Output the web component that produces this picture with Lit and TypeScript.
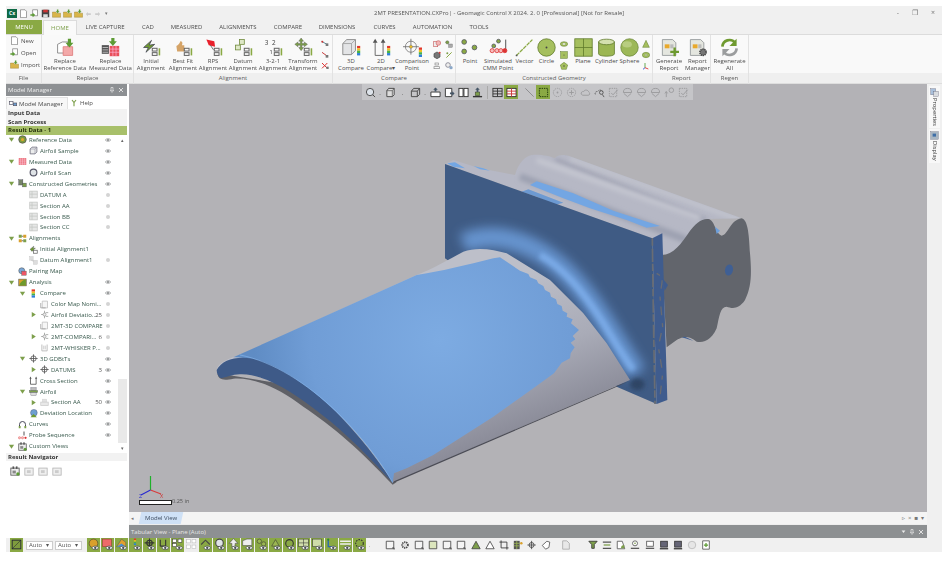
import { LitElement, css, html, svg } from "lit";
import { customElement } from "lit/decorators.js";

const G = "#8aa944";
const rainbow = (x = 18, y = 10) => svg`
  <rect x=${x} y=${y} width="4" height="3" fill="#e2382c"/>
  <rect x=${x} y=${y + 3} width="4" height="3" fill="#f0c020"/>
  <rect x=${x} y=${y + 6} width="4" height="3" fill="#45b04a"/>
  <rect x=${x} y=${y + 9} width="4" height="3" fill="#2f7fd8"/>`;
const alignMark = svg`
  <rect x="13" y="13" width="6" height="3.5" fill="none" stroke="#666" stroke-width="1.3"/>
  <rect x="13" y="18.5" width="6" height="3.5" fill="none" stroke="#666" stroke-width="1.3"/>
  <rect x="21" y="13" width="2" height="9" fill=${G}/>`;
const doc = svg`
  <path d="M3 2h13l4 4v16H3z" fill="#e4e6df" stroke="#8a8f90"/>
  <rect x="6" y="8" width="6" height="5" fill="#e9a92b"/>
  <rect x="13" y="8" width="4" height="5" fill="#bbb"/>`;

const bigIcons: Record<string, unknown> = {
  replaceRef: svg`
    <path d="M2 8l6-3h7v11l-6 3H2z" fill="#fff" stroke="#777"/>
    <path d="M9 11h12v11H9z" fill="#f3a9a9" stroke="#d77"/>
    <path d="M15 1h4v5h3l-5 6-5-6h3z" fill="#5d9b34"/>`,
  replaceMeas: svg`
    <rect x="1" y="9" width="9" height="11" fill="#555"/>
    <path d="M2 12h7M2 15h7M2 18h7" stroke="#ccc"/>
    <rect x="11" y="10" width="12" height="13" fill="#e8505a"/>
    <path d="M11 14h12M11 18h12M15 10v13M19 10v13" stroke="#fbd" stroke-width=".8"/>
    <path d="M13 0h4v4h3l-5 6-5-6h3z" fill="#5d9b34"/>`,
  initial: svg`<path d="M2 12L12 3l-3 6 7-1L5 18l3-6z" fill="#6f9a30" stroke="#445"/>${alignMark}`,
  bestfit: svg`<path d="M3 10c2-1 4-3 5-6 3 0 3 3 2 5h3v8H4z" fill="#d5a468"/>${alignMark}`,
  rps: svg`<path d="M3 2l10 2 1 7-8-2z" fill="#e8202c"/><path d="M8 9l4 6" stroke="#555"/>${alignMark}`,
  datum: svg`<rect x="7" y="2" width="6" height="6" fill="#dfe8c8" stroke="#6f8a3c"/><rect x="2" y="9" width="6" height="6" fill="#dfe8c8" stroke="#6f8a3c"/>${alignMark}`,
  three: svg`
    <text x="1" y="9" font-size="8" fill="#444" font-family="Noto Sans">3</text>
    <text x="10" y="9" font-size="8" fill="#444" font-family="Noto Sans">2</text>
    <text x="7" y="20" font-size="7" fill="#444" font-family="Noto Sans">1</text>${alignMark}`,
  transform: svg`
    <path d="M9 0l3 4h-2v3h3V5l4 3-4 3V9h-3v3h2l-3 4-3-4h2V9H5v2L1 8l4-3v2h3V4H6z" fill="#7d9f4b" stroke="#555" stroke-width=".5"/>${alignMark}`,
  cmp3d: svg`<path d="M1 7l5-5h11v14l-5 5H1z" fill="#e3e4e6" stroke="#777"/><path d="M1 7h11v14M12 7l5-5" fill="none" stroke="#999"/>${rainbow(19, 10)}`,
  cmp2d: svg`<path d="M4 22V4M14 22V4M4 22h10" fill="none" stroke="#666" stroke-width="1.2"/><path d="M4 1l-3 5h6zM14 1l-3 5h6z" fill="#555"/>${rainbow(19, 10)}`,
  cmpPt: svg`<circle cx="10" cy="11" r="7" fill="none" stroke="#777"/><path d="M10 1v20M0 11h20" stroke="#666"/><circle cx="10" cy="11" r="2" fill="#f0c020" stroke="#666" stroke-width=".5"/>${rainbow(20, 12)}`,
  point: svg`<circle cx="4" cy="5" r="3" fill=${G} stroke="#556"/><circle cx="4" cy="17" r="3" fill=${G} stroke="#556"/><circle cx="17" cy="12" r="3" fill=${G} stroke="#556"/>`,
  sim: svg`
    <circle cx="12" cy="4" r="2.4" fill=${G} stroke="#556"/><circle cx="6" cy="10" r="2.4" fill=${G} stroke="#556"/><path d="M21 2v12" stroke="#777" stroke-width="1.6"/>
    <circle cx="4" cy="16" r="2.6" fill="#f6bcbc" stroke="#d33"/><circle cx="10" cy="16" r="2.6" fill="#f6bcbc" stroke="#d33"/><circle cx="15" cy="16" r="2.6" fill="#f6bcbc" stroke="#d33"/><circle cx="20" cy="16" r="2.6" fill="#d33" stroke="#d33"/>`,
  vector: svg`<path d="M2 22L22 2" stroke=${G} stroke-width="1.6" stroke-dasharray="5 1"/><circle cx="2" cy="22" r="1.2" fill="#555"/>`,
  circle: svg`<circle cx="12" cy="12" r="11" fill="#a5bf5e" stroke="#5f7a2a"/><circle cx="12" cy="12" r="1.2" fill="#444"/>`,
  plane: svg`<rect x="1" y="1" width="22" height="22" fill="#a5bf5e" stroke="#5f7a2a"/><path d="M12 1v22M1 12h22" stroke="#5f7a2a"/>`,
  cylinder: svg`
    <path d="M2 5v15c0 4 20 4 20 0V5z" fill="#9bb652" stroke="#5f7a2a"/>
    <ellipse cx="12" cy="5" rx="10" ry="3.5" fill="#d4e0ae" stroke="#5f7a2a"/>`,
  sphere: svg`<circle cx="12" cy="12" r="11" fill="#9cb858" stroke="#6f8a3c"/><ellipse cx="9" cy="8" rx="6" ry="4" fill="#b8cd80"/>`,
  genReport: svg`${doc}<path d="M17 12h3v4h4v3h-4v4h-3v-4h-4v-3h4z" fill="#6d9a2e"/>`,
  mgrReport: svg`${doc}<circle cx="19" cy="18" r="4" fill="#777" stroke="#444" stroke-dasharray="1.5 1" stroke-width="2"/>`,
  regen: svg`
    <path d="M3 11A9 9 0 0 1 19 6" fill="none" stroke="#6f9a30" stroke-width="3.4"/><path d="M21 1v9h-9z" fill="#6f9a30"/>
    <path d="M21 13A9 9 0 0 1 5 18" fill="none" stroke="#9b9d9e" stroke-width="3.4"/><path d="M3 23v-9h9z" fill="#9b9d9e"/>`,
};

const smallIcons: Record<string, unknown> = {
  new: svg`<path d="M4 2h12l4 4v17H4z" fill="#fff" stroke="#666" stroke-width="1.6"/>`,
  open: svg`<path d="M7 2h13v16H7z" fill="#fff" stroke="#666" stroke-width="1.6"/><path d="M1 14h6v-4l7 6-7 6v-4H1z" fill="#5d9b34"/>`,
  import: svg`<path d="M1 8h9l2 3h11v11H1z" fill="#d9b54a" stroke="#8d7a2e"/><path d="M13 1h4v5h3l-5 5-5-5h3z" fill="#5d9b34"/>`,
  a1: svg`<path d="M2 4l14 8" stroke="#5e8a96" stroke-width="3"/><rect x="14" y="10" width="8" height="8" fill="#777"/><circle cx="4" cy="5" r="3" fill="#c33"/>`,
  a2: svg`<path d="M3 4l14 10" stroke="#c94040" stroke-width="3"/><rect x="14" y="12" width="8" height="8" fill="#777"/>`,
  a3: svg`<path d="M3 3l16 16M19 3L3 19" stroke="#d33" stroke-width="3"/><rect x="16" y="14" width="7" height="7" fill="#777"/>`,
  c1: svg`<rect x="2" y="4" width="12" height="16" fill="#eee" stroke="#c66" stroke-width="2"/><circle cx="16" cy="9" r="7" fill="#f3b5b5" stroke="#c66" stroke-width="2"/>`,
  c2: svg`<path d="M3 8l9-5 9 5v10l-9 5-9-5z" fill="#777" stroke="#444" stroke-width="2"/><circle cx="20" cy="5" r="3" fill="#d33"/>`,
  c3: svg`<rect x="6" y="3" width="10" height="6" fill="none" stroke="#888" stroke-width="2"/><rect x="3" y="14" width="16" height="6" fill="none" stroke="#888" stroke-width="2"/>`,
  c4: svg`<circle cx="7" cy="7" r="5" fill="#7d9f4b" stroke="#444"/><rect x="11" y="12" width="11" height="10" fill="#aaa" stroke="#555"/>`,
  c5: svg`<path d="M4 20L20 4" stroke=${G} stroke-width="3"/><circle cx="7" cy="7" r="3" fill="#7d9f4b"/>`,
  c6: svg`<circle cx="9" cy="9" r="7" fill="#eee" stroke="#667" stroke-width="2"/><circle cx="18" cy="17" r="5" fill="#8ba8c8"/>`,
  ellipse: svg`<ellipse cx="12" cy="12" rx="11" ry="7" fill="#a5bf5e" stroke="#5f7a2a" stroke-width="1.5"/><ellipse cx="12" cy="12" rx="5" ry="3" fill="#fff" stroke="#5f7a2a"/>`,
  square: svg`<rect x="2" y="2" width="20" height="20" fill="#a5bf5e" stroke="#5f7a2a" stroke-width="1.5"/><circle cx="12" cy="12" r="1.6" fill="#444"/>`,
  pentagon: svg`<path d="M12 1l11 8-4 13H5L1 9z" fill="#a5bf5e" stroke="#5f7a2a" stroke-width="1.5"/><circle cx="12" cy="12" r="2" fill="#444"/>`,
  cone: svg`<path d="M12 1l10 21H2z" fill="#a5bf5e" stroke="#5f7a2a" stroke-width="1.5"/>`,
  torus: svg`<ellipse cx="12" cy="12" rx="11" ry="8" fill="#a5bf5e" stroke="#5f7a2a" stroke-width="1.5"/><ellipse cx="12" cy="12" rx="4" ry="2.5" fill="#eee" stroke="#5f7a2a"/>`,
  triad: svg`<path d="M9 3v14" stroke="#4a9a30" stroke-width="2.5"/><path d="M9 17l10 4" stroke="#d22" stroke-width="2.5"/><path d="M9 17l-6 5" stroke="#2244cc" stroke-width="2.5"/>`,
  refData: svg`<circle cx="12" cy="12" r="10" fill="#7d9a3c" stroke="#555" stroke-width="2"/><circle cx="12" cy="12" r="4" fill="#e3a92b"/>`,
  box: svg`<path d="M3 8l5-5h13v13l-5 5H3z" fill="#eceded" stroke="#667" stroke-width="2"/><path d="M3 8h13v13M16 8l5-5" fill="none" stroke="#889" stroke-width="1.5"/>`,
  meas: svg`<rect x="2" y="3" width="20" height="18" fill="#ea6a74"/><path d="M2 8h20M2 13h20M2 18h20M7 3v18M12 3v18M17 3v18" stroke="#fcd" stroke-width="1.3"/>`,
  ring: svg`<circle cx="12" cy="12" r="9" fill="#dfe3e6" stroke="#556" stroke-width="3"/>`,
  geo: svg`<rect x="2" y="2" width="11" height="14" fill="#77856a" stroke="#445"/><rect x="12" y="11" width="10" height="10" fill="#7d9f4b" stroke="#445"/>`,
  geoGray: svg`<rect x="2" y="3" width="20" height="18" fill="#e6e7e6" stroke="#c3c5c3" stroke-width="2"/><path d="M8 3v18M2 11h20" stroke="#c3c5c3" stroke-width="2"/>`,
  alignments: svg`<rect x="2" y="2" width="8" height="8" fill="#7d9f4b"/><rect x="14" y="2" width="8" height="8" fill="#d9a02b"/><rect x="2" y="14" width="8" height="8" fill="#d9a02b"/><rect x="14" y="14" width="8" height="8" fill="#7d9f4b"/><path d="M10 6h4M10 18h4" stroke="#444" stroke-width="2"/>`,
  align1: svg`<path d="M3 11L13 3l-2 6 6-1-9 9z" fill="#6f9a30" stroke="#445"/><rect x="12" y="14" width="10" height="8" fill="none" stroke="#666" stroke-width="2"/>`,
  align2: svg`<rect x="2" y="2" width="9" height="9" fill="#ddd" stroke="#bbb"/><rect x="12" y="12" width="10" height="10" fill="#ddd" stroke="#bbb"/><path d="M6 11l6 3" stroke="#bbb" stroke-width="2"/>`,
  pairing: svg`<circle cx="10" cy="10" r="8" fill="#7aa7d8" stroke="#555" stroke-width="1.5"/><rect x="10" y="11" width="12" height="11" fill="#e56" stroke="#555"/>`,
  analysis: svg`<rect x="2" y="3" width="20" height="18" fill="#d9a02b" stroke="#555" stroke-width="1.5"/><path d="M3 20C6 10 14 5 21 4v16z" fill="#6d9a2e"/>`,
  compare: svg`<rect x="7" y="1" width="9" height="6" fill="#e2382c"/><rect x="7" y="7" width="9" height="5" fill="#f0c020"/><rect x="7" y="12" width="9" height="5" fill="#45b04a"/><rect x="7" y="17" width="9" height="6" fill="#2f7fd8"/>`,
  colorMap: svg`<path d="M6 3h14v18H6z" fill="#f6f6f6" stroke="#bcbcbc" stroke-width="2"/><path d="M2 8v13h13" fill="none" stroke="#999" stroke-width="2"/>`,
  deviation: svg`<path d="M12 2v20M3 12h6M15 7h7M15 17h7" stroke="#a9aca9" stroke-width="2.5"/><circle cx="12" cy="12" r="4" fill="#eee" stroke="#999" stroke-width="2"/>`,
  whisker: svg`<path d="M5 4v17h14V4" fill="none" stroke="#bbb" stroke-width="2.5"/><path d="M10 7v10M14 7v10" stroke="#bbb" stroke-width="2"/>`,
  gdt: svg`<circle cx="12" cy="12" r="7" fill="none" stroke="#555" stroke-width="2.2"/><path d="M12 1v22M1 12h22" stroke="#555" stroke-width="2.2"/>`,
  cross: svg`<path d="M4 22V5M19 22V5M4 22h15" fill="none" stroke="#555" stroke-width="2.2"/><path d="M4 1L1 7h6zM19 1l-3 6h6z" fill="#555"/>`,
  airfoil: svg`<rect x="5" y="2" width="14" height="7" fill="#bbb" stroke="#556"/><rect x="1" y="9" width="22" height="6" fill="#7d9f4b" stroke="#556"/><rect x="5" y="15" width="14" height="7" fill="#ddd" stroke="#556"/>`,
  section: svg`<rect x="6" y="3" width="12" height="8" fill="#e2e2e2" stroke="#ccc"/><rect x="2" y="11" width="20" height="9" fill="#e8e8e8" stroke="#ccc" stroke-width="2"/>`,
  location: svg`<circle cx="13" cy="10" r="9" fill="#6d9fd0" stroke="#446"/><path d="M4 22l8-9 9 9z" fill="#6d9a2e"/>`,
  curves: svg`<path d="M4 20V12a8 8 0 0 1 16 0v8" fill="none" stroke="#445" stroke-width="2.6"/><rect x="2" y="16" width="5" height="6" fill="#7d9f4b"/><rect x="17" y="16" width="5" height="6" fill="#7d9f4b"/>`,
  probe: svg`<path d="M16 1v11" stroke="#666" stroke-width="3"/><circle cx="4" cy="18" r="3" fill="#f6bcbc" stroke="#d33"/><circle cx="12" cy="18" r="3" fill="#f6bcbc" stroke="#d33"/><circle cx="20" cy="18" r="3" fill="#d33"/>`,
  views: svg`<rect x="2" y="5" width="20" height="17" fill="#eee" stroke="#555" stroke-width="2"/><rect x="6" y="1" width="4" height="6" fill="#555"/><rect x="14" y="1" width="4" height="6" fill="#555"/><rect x="6" y="11" width="8" height="7" fill="#888"/><circle cx="19" cy="19" r="4" fill="#5d9b34"/>`,
  manager: svg`<rect x="1" y="4" width="11" height="9" fill="#fff" stroke="#556" stroke-width="2"/><rect x="13" y="9" width="10" height="8" fill="#6d9fd0" stroke="#556" stroke-width="2"/>`,
  help: svg`<path d="M12 22V11M6 3l6 8 6-8" fill="none" stroke="#7d9f4b" stroke-width="3.4"/>`,
  props: svg`<rect x="2" y="2" width="13" height="16" fill="#a9c0dc" stroke="#667"/><rect x="10" y="9" width="12" height="13" fill="#d9dce0" stroke="#667"/>`,
  display: svg`<rect x="2" y="2" width="20" height="20" fill="#a9b6c2" stroke="#667"/><rect x="7" y="7" width="9" height="8" fill="#3f6fa8"/>`,
  pin: svg`<path d="M8 2h8v10l3 3H5l3-3zM12 15v8" fill="none" stroke="#eee" stroke-width="2.6"/>`,
  close: svg`<path d="M4 4l16 16M20 4L4 20" stroke="#eee" stroke-width="3.4"/>`,
};

type Btn = { t: string[]; i: string; w: number };
type Col = { col: string[]; w: number };
const ribbon: { name: string; w: number; items: (Btn | Col)[] }[] = [
  { name: "Replace", w: 92, items: [
    { t: ["Replace", "Reference Data"], i: "replaceRef", w: 46 },
    { t: ["Replace", "Measured Data"], i: "replaceMeas", w: 45 },
  ] },
  { name: "Alignment", w: 199, items: [
    { t: ["Initial", "Alignment"], i: "initial", w: 34 },
    { t: ["Best Fit", "Alignment"], i: "bestfit", w: 30 },
    { t: ["RPS", "Alignment"], i: "rps", w: 30 },
    { t: ["Datum", "Alignment"], i: "datum", w: 30 },
    { t: ["3-2-1", "Alignment"], i: "three", w: 30 },
    { t: ["Transform", "Alignment"], i: "transform", w: 30 },
    { col: ["a1", "a2", "a3"], w: 14 },
  ] },
  { name: "Compare", w: 123, items: [
    { t: ["3D", "Compare"], i: "cmp3d", w: 36 },
    { t: ["2D", "Compare\u25be"], i: "cmp2d", w: 24 },
    { t: ["Comparison", "Point"], i: "cmpPt", w: 38 },
    { col: ["c1", "c2", "c3"], w: 12 },
    { col: ["c4", "c5", "c6"], w: 12 },
  ] },
  { name: "Constructed Geometry", w: 197, items: [
    { t: ["Point", ""], i: "point", w: 28 },
    { t: ["Simulated", "CMM Point"], i: "sim", w: 28 },
    { t: ["Vector", ""], i: "vector", w: 25 },
    { t: ["Circle", ""], i: "circle", w: 19 },
    { col: ["ellipse", "square", "pentagon"], w: 15 },
    { t: ["Plane", ""], i: "plane", w: 24 },
    { t: ["Cylinder", ""], i: "cylinder", w: 23 },
    { t: ["Sphere", ""], i: "sphere", w: 23 },
    { col: ["cone", "torus", "triad"], w: 10 },
  ] },
  { name: "Report", w: 58, items: [
    { t: ["Generate", "Report"], i: "genReport", w: 32 },
    { t: ["Report", "Manager"], i: "mgrReport", w: 25 },
  ] },
  { name: "Regen", w: 38, items: [{ t: ["Regenerate", "All"], i: "regen", w: 37 }] },
];

const tabs: [string, number][] = [
  ["LIVE CAPTURE", 56], ["CAD", 30], ["MEASURED", 47], ["ALIGNMENTS", 56], ["COMPARE", 44],
  ["DIMENSIONS", 54], ["CURVES", 41], ["AUTOMATION", 55], ["TOOLS", 38],
];

type Row = { l: string; d: number; a?: "o" | "c"; i: string; n?: string; e?: "e" | "d" };
const tree: Row[] = [
  { l: "Reference Data", d: 0, a: "o", i: "refData", e: "e" },
  { l: "Airfoil Sample", d: 1, i: "box", e: "e" },
  { l: "Measured Data", d: 0, a: "o", i: "meas", e: "e" },
  { l: "Airfoil Scan", d: 1, i: "ring", e: "e" },
  { l: "Constructed Geometries", d: 0, a: "o", i: "geo", e: "e" },
  { l: "DATUM A", d: 1, i: "geoGray", e: "d" },
  { l: "Section AA", d: 1, i: "geoGray", e: "d" },
  { l: "Section BB", d: 1, i: "geoGray", e: "d" },
  { l: "Section CC", d: 1, i: "geoGray", e: "d" },
  { l: "Alignments", d: 0, a: "o", i: "alignments" },
  { l: "Initial Alignment1", d: 1, i: "align1" },
  { l: "Datum Alignment1", d: 1, i: "align2", e: "d" },
  { l: "Pairing Map", d: 0, i: "pairing" },
  { l: "Analysis", d: 0, a: "o", i: "analysis", e: "e" },
  { l: "Compare", d: 1, a: "o", i: "compare", e: "e" },
  { l: "Color Map Nomi...", d: 2, i: "colorMap", e: "d" },
  { l: "Airfoil Deviatio...", d: 2, a: "c", i: "deviation", n: "25", e: "d" },
  { l: "2MT-3D COMPARE", d: 2, i: "colorMap", e: "d" },
  { l: "2MT-COMPARI...", d: 2, a: "c", i: "deviation", n: "6", e: "d" },
  { l: "2MT-WHISKER P...", d: 2, i: "whisker", e: "d" },
  { l: "3D GDBtTs", d: 1, a: "o", i: "gdt", e: "e" },
  { l: "DATUMS", d: 2, a: "c", i: "gdt", n: "3", e: "e" },
  { l: "Cross Section", d: 1, i: "cross", e: "e" },
  { l: "Airfoil", d: 1, a: "o", i: "airfoil", e: "e" },
  { l: "Section AA", d: 2, a: "c", i: "section", n: "50", e: "e" },
  { l: "Deviation Location", d: 1, i: "location", e: "e" },
  { l: "Curves", d: 0, i: "curves", e: "e" },
  { l: "Probe Sequence", d: 0, i: "probe", e: "e" },
  { l: "Custom Views", d: 0, a: "o", i: "views" },
];

const eye = svg`<path d="M1 12c5-7 17-7 22 0-5 7-17 7-22 0z" fill="#fff" stroke="#4a4f52" stroke-width="2.4"/><circle cx="12" cy="12" r="3.6" fill="#4a4f52"/>`;
const eyeSoft = svg`<path d="M1 12c5-7 17-7 22 0-5 7-17 7-22 0z" fill="#f4f4f4" stroke="#8a8d8e" stroke-width="2.6"/><circle cx="12" cy="12" r="3.8" fill="#808384"/>`;
const ic = (s: number, body: unknown) => html`<svg width=${s} height=${s} viewBox="0 0 24 24">${body}</svg>`;

// grey outline glyphs of the view and bottom toolbars
const tool = (k: string) => {
  switch (k) {
    case "sphere": return svg`<circle cx="11" cy="11" r="8" fill="#dde3ea" stroke="#444" stroke-width="2"/><path d="M17 17l5 5" stroke="#444" stroke-width="2"/>`;
    case "cube": return svg`<path d="M4 8l4-5h12v14l-4 4H4z" fill="#ddd" stroke="#444" stroke-width="2"/><path d="M4 8h12v13M16 8l4-5" fill="none" stroke="#444" stroke-width="1.4"/>`;
    case "wire": return svg`<path d="M3 9l5-6h13v13l-5 5H3zM3 9h13v12M16 9l5-6" fill="none" stroke="#444" stroke-width="2"/>`;
    case "up": return svg`<path d="M2 11h20v10H2z" fill="#fff" stroke="#333" stroke-width="2"/><path d="M12 1l5 5h-3v4h-4V6H7z" fill="#456"/>`;
    case "right": return svg`<path d="M3 3h14v18H3z" fill="#fff" stroke="#333" stroke-width="2"/><path d="M23 14l-5 5v-3h-5v-4h5V9z" fill="#456"/>`;
    case "pane": return svg`<rect x="2" y="3" width="9" height="18" fill="#fff" stroke="#333" stroke-width="2"/><rect x="13" y="3" width="9" height="18" fill="#fff" stroke="#333" stroke-width="2"/>`;
    case "probe": return svg`<path d="M2 21h20" stroke="#333" stroke-width="3"/><rect x="7" y="11" width="10" height="8" fill="#7d9f4b" stroke="#333"/><path d="M12 1l5 5h-3v5h-4V6H7z" fill="#456"/>`;
    case "grid": return svg`<rect x="2" y="3" width="20" height="18" fill="none" stroke="#333" stroke-width="2"/><path d="M2 9h20M2 15h20M12 3v18" stroke="#333" stroke-width="2"/>`;
    case "gridR": return svg`<rect x="2" y="3" width="20" height="18" fill="#fff" stroke="#333" stroke-width="2"/><path d="M2 9h20M2 15h20M12 3v18" stroke="#c33" stroke-width="2"/>`;
    case "line": return svg`<path d="M3 3l18 18" stroke="#8a8a8c" stroke-width="2"/>`;
    case "dash": return svg`<rect x="3" y="3" width="18" height="18" fill="none" stroke="#1d3308" stroke-width="2" stroke-dasharray="3 2"/>`;
    case "fade": return svg`<circle cx="12" cy="12" r="9" fill="none" stroke="#9a9a9d" stroke-width="2" stroke-dasharray="3 2"/><circle cx="12" cy="12" r="2" fill="#9a9a9d"/>`;
    case "fadePlus": return svg`<circle cx="12" cy="12" r="9" fill="none" stroke="#9a9a9d" stroke-width="2" stroke-dasharray="3 2"/><path d="M12 7v10M7 12h10" stroke="#9a9a9d" stroke-width="2"/>`;
    case "cloud": return svg`<path d="M3 16c-2-4 2-7 5-6 2-5 10-4 11 1 3 1 3 7-1 7H6z" fill="none" stroke="#9a9a9d" stroke-width="2"/>`;
    case "mag": return svg`<path d="M3 16c-2-4 2-7 5-6 2-5 10-4 11 1" fill="none" stroke="#555" stroke-width="2" stroke-dasharray="3 2"/><circle cx="16" cy="12" r="4" fill="none" stroke="#555" stroke-width="2"/><path d="M18 16l4 6" stroke="#555" stroke-width="2"/>`;
    case "fadeSq": return svg`<rect x="3" y="3" width="16" height="18" fill="none" stroke="#9a9a9d" stroke-width="2" stroke-dasharray="3 2"/><path d="M7 13l4 4 10-11" fill="none" stroke="#9a9a9d" stroke-width="2"/>`;
    case "fadeDome": return svg`<path d="M3 12a9 9 0 0 1 18 0zM4 14l8 7 8-7" fill="none" stroke="#9a9a9d" stroke-width="2"/>`;
    case "fadeKey": return svg`<circle cx="16" cy="7" r="5" fill="none" stroke="#9a9a9d" stroke-width="2"/><path d="M5 10v12M2 14l3-4 3 4" fill="none" stroke="#9a9a9d" stroke-width="2"/>`;
    case "frame": return svg`<path d="M3 3h18v18H3z" fill="#f4f4f4" stroke="#444" stroke-width="2"/><path d="M17 19h5v4" stroke="#444" stroke-width="2" fill="none"/>`;
    case "frameGreen": return svg`<path d="M3 3h18v18H3z" fill="#dce6bd" stroke="#444" stroke-width="2"/>`;
    case "gear": return svg`<circle cx="12" cy="12" r="7" fill="#ddd" stroke="#444" stroke-width="4" stroke-dasharray="3 2"/>`;
    case "tri": return svg`<path d="M12 3l10 18H2z" fill="#7d9f4b" stroke="#444" stroke-width="2"/>`;
    case "triO": return svg`<path d="M12 3l10 18H2z" fill="#fff" stroke="#444" stroke-width="2"/>`;
    case "crop": return svg`<path d="M5 1v18h18M1 5h18v18" fill="none" stroke="#333" stroke-width="2"/>`;
    case "tbl": return svg`<rect x="2" y="2" width="14" height="20" fill="#555"/><path d="M2 8h14M2 14h14M9 2v20" stroke="#9bb652" stroke-width="2"/><circle cx="20" cy="8" r="3" fill="#d9a02b"/>`;
    case "cross": return svg`<circle cx="11" cy="12" r="6" fill="none" stroke="#444" stroke-width="2"/><path d="M11 2v20M1 12h20" stroke="#444" stroke-width="2"/>`;
    case "tag": return svg`<path d="M3 13L14 3l7 2-2 13-8 4z" fill="#fff" stroke="#555" stroke-width="2"/>`;
    case "doc": return svg`<path d="M4 2h10l6 6v14H4z" fill="#e8e8e8" stroke="#aaa" stroke-width="2"/>`;
    case "fnl": return svg`<path d="M2 3h20l-7 8v9H9v-9z" fill="#7d9f4b" stroke="#333" stroke-width="2"/>`;
    case "bar": return svg`<path d="M2 5h20M2 20h20" stroke="#555" stroke-width="3"/><path d="M4 12h16" stroke="#7d9f4b" stroke-width="3"/>`;
    case "docG": return svg`<path d="M3 3h12l6 18H3z" fill="#fff" stroke="#555" stroke-width="2"/><path d="M12 20a8 8 0 0 1 8-8v8z" fill="#7d9f4b"/>`;
    case "stamp": return svg`<circle cx="12" cy="8" r="6" fill="#fff" stroke="#555" stroke-width="2"/><path d="M2 20h20" stroke="#555" stroke-width="3"/><circle cx="12" cy="8" r="2" fill="#7d9f4b"/>`;
    case "mon": return svg`<rect x="4" y="3" width="16" height="12" fill="#fff" stroke="#555" stroke-width="2"/><path d="M2 20h20" stroke="#555" stroke-width="3"/>`;
    case "monD": return svg`<rect x="4" y="3" width="16" height="14" fill="#667" stroke="#333" stroke-width="2"/><path d="M2 21h20" stroke="#333" stroke-width="3"/>`;
    case "ball": return svg`<circle cx="12" cy="12" r="9" fill="#e6e6e6" stroke="#bbb" stroke-width="2"/>`;
    case "plus": return svg`<path d="M4 2h16v20H4z" fill="#fff" stroke="#555" stroke-width="2"/><path d="M12 7v10M7 12h10" stroke="#5d9b34" stroke-width="3"/>`;
    default: return svg``;
  }
};

// second value: what follows the button (1 dot, 2 divider, 3 wide dot, 4 gap)
const viewBar = [
  ["sphere", 1], ["cube", 3], ["wire", 1], ["up", 0], ["right", 0], ["pane", 0], ["probe", 2],
  ["grid", 0], ["gridR", 4], ["line", 0], ["dash", 0], ["fade", 0], ["fadePlus", 0], ["cloud", 0], ["mag", 0], ["fadeSq", 0], ["fadeDome", 0], ["fadeDome", 0], ["fadeDome", 0], ["fadeKey", 0], ["fadeSq", 0],
] as [string, number][];

const greenGlyphs: unknown[] = [
  svg`<circle cx="12" cy="10" r="8" fill="#d9a02b" stroke="#333"/>`,
  svg`<rect x="3" y="2" width="16" height="14" fill="#ee6a6a" stroke="#933"/>`,
  svg`<path d="M3 16L12 2l8 6v8z" fill="#e2a02c" stroke="#555"/><path d="M3 16l9-6 8 6z" fill="#4a8fd0"/>`,
  svg`${rainbow(9, 1)}`,
  svg`<circle cx="12" cy="9" r="5" fill="none" stroke="#333" stroke-width="2"/><path d="M12 1v16M3 9h18" stroke="#333" stroke-width="2"/>`,
  svg`<path d="M6 15V3M16 15V3M6 15h10" fill="none" stroke="#333" stroke-width="2"/>`,
  svg`<rect x="3" y="2" width="7" height="6" fill="#fff" stroke="#333"/><rect x="13" y="2" width="7" height="6" fill="#fff" stroke="#333"/><rect x="3" y="10" width="7" height="6" fill="#fff" stroke="#333"/>`,
];
const greenEnd: unknown[] = [
  svg`<path d="M4 12l8-8 8 8" fill="none" stroke="#444" stroke-width="2"/>`,
  svg`<circle cx="12" cy="9" r="7" fill="#dfe3e6" stroke="#444" stroke-width="2"/>`,
  svg`<path d="M12 1l8 9h-5v6H9v-6H4z" fill="#eee" stroke="#444"/>`,
  svg`<path d="M3 5l8-3h9v12H3z" fill="#eee" stroke="#444"/>`,
  svg`<circle cx="8" cy="6" r="4" fill="#9bb652" stroke="#333"/><circle cx="16" cy="11" r="4" fill="#9bb652" stroke="#333"/>`,
  svg`<path d="M12 3l7 12H5z" fill="#9bb652" stroke="#333"/>`,
  svg`<circle cx="12" cy="10" r="7" fill="none" stroke="#333" stroke-width="2"/>`,
  svg`<rect x="3" y="2" width="18" height="14" fill="#cfdcaa" stroke="#333"/><path d="M12 2v14M3 9h18" stroke="#333"/>`,
  svg`<rect x="3" y="2" width="16" height="14" fill="#cfdcaa" stroke="#333"/>`,
  svg`<path d="M6 2v14h12" fill="none" stroke="#2a6ab0" stroke-width="2.5"/><circle cx="6" cy="3" r="2" fill="#2e8b2e"/>`,
  svg`<path d="M2 6h20M2 11h20" stroke="#eee" stroke-width="3"/>`,
  svg`<circle cx="12" cy="10" r="7" fill="none" stroke="#333" stroke-width="2" stroke-dasharray="3 2"/>`,
];
const bottomBar = ["frame", "gear", "frame", "frameGreen", "frame", "frame", "tri", "triO", "crop", "tbl", "cross", "tag"];
const bottomBar2 = ["fnl", "bar", "docG", "stamp", "mon", "monD", "monD", "ball", "plus"];

const ridgePath = "M15 72 L40 60 L120 85 L225 105 C235 70 255 48 275 45 C300 42 330 48 345 55 C352 46 365 43 385 47 L905 235 L800 237 L700 340 L665 345 L637 295Z";

@customElement("app-root")
export class AppRoot extends LitElement {
  static styles = css`
    :host {
      display: block;
      width: 942px;
      height: 562px;
      background: #fff;
      font-family: "Open Sans", "Noto Sans", sans-serif;
      font-size: 6px;
      color: #4c4c4c;
      overflow: hidden;
      --g: #8aa944;
    }
    svg { display: block; flex: none; }
    .app {
      box-sizing: border-box;
      height: 562px;
      padding: 6px 0 10px 6px;
      display: flex;
      flex-direction: column;
      filter: blur(0.3px);
    }
    .title {
      height: 14px;
      background: #f0f0f0;
      display: flex;
      align-items: center;
      flex: none;
    }
    .qat { display: flex; gap: 2px; padding-left: 1px; width: 367px; align-items: center; }
    .logo {
      width: 10px; height: 9px; background: #0f6a45; color: #fff; font-size: 5px;
      display: flex; align-items: center; justify-content: center; font-weight: 700;
    }
    .title-text { flex: 1; font-size: 5.96px; color: #555; white-space: nowrap; }
    .win { display: flex; gap: 13px; padding-right: 7px; color: #777; font-size: 7px; line-height: 8px; align-items: center; }
    .tabs {
      height: 15px;
      background: #f0f0f0;
      display: flex;
      align-items: stretch;
      flex: none;
      border-bottom: 1px solid #dcdcdc;
      box-sizing: border-box;
    }
    .tab { display: flex; align-items: center; justify-content: center; font-size: 6px; color: #4c4c4c; }
    .menu { width: 36px; background: var(--g); color: #fff; }
    .home { width: 34px; background: #fafafa; color: #7d9f4b; border: 1px solid #dcdcdc; border-bottom: none; box-sizing: border-box; margin-left: 1px; height: 15px; }
    .ribbon { display: flex; height: 49px; flex: none; }
    .group { display: flex; flex-direction: column; border-right: 1px solid #e2e2e2; box-sizing: border-box; }
    .fill { flex: 1; border: none; }
    .gbody { height: 38px; background: #f9f9f9; display: flex; padding-top: 3px; box-sizing: border-box; }
    .gname { height: 11px; background: #efefef; text-align: center; line-height: 11px; color: #5a5a5a; font-size: 6px; border-bottom: 1px solid #dedede; box-sizing: border-box; }
    .filegrp { padding: 1px 0 0 4px; flex-direction: column; gap: 3px; }
    .fbtn { display: flex; align-items: center; gap: 2px; height: 9px; }
    .big { display: flex; flex-direction: column; align-items: center; }
    .big .ic { height: 20px; display: flex; align-items: flex-start; }
    .lb { line-height: 7px; text-align: center; white-space: nowrap; color: #4c4c4c; font-size: 6px; }
    .scol { display: flex; flex-direction: column; align-items: center; gap: 3px; padding-top: 2px; }
    .main { flex: 1; display: flex; min-height: 0; }
    .left { width: 123px; flex: none; display: flex; flex-direction: column; background: #fff; }
    .phead {
      height: 12px; margin-right: 2px; background: #8d9093; color: #eee; display: flex; align-items: center;
      justify-content: space-between; padding: 0 3px 0 2px; box-sizing: border-box; flex: none;
    }
    .pbtns { display: flex; gap: 3px; }
    .ptabs { height: 13px; display: flex; align-items: flex-end; flex: none; margin-right: 2px; }
    .ptab { display: flex; align-items: center; gap: 2px; padding: 0 4px 0 2px; height: 12px; }
    .ptab.on { background: #f7f7f7; border: 1px solid #e2e2e2; border-bottom: none; box-sizing: border-box; }
    .sec { height: 8.5px; line-height: 8.5px; background: #f2f2f2; font-weight: 700; color: #333; padding-left: 2px; margin-right: 2px; flex: none; }
    .sec.on { background: #a8c06a; color: #26310c; }
    .treewrap { flex: 1; display: flex; min-height: 0; margin-right: 2px; }
    .tree { flex: 1; min-width: 0; padding-right: 5px; }
    .row { height: 10.95px; display: flex; align-items: center; color: #38594c; white-space: nowrap; }
    .arrow { width: 11px; flex: none; display: flex; justify-content: center; }
    .rico { width: 11px; flex: none; display: flex; justify-content: center; margin-right: 1px; }
    .rname { flex: 1; min-width: 0; }
    .rn { color: #555; padding-right: 1px; }
    .reye { width: 10px; flex: none; display: flex; justify-content: center; }
    .dot { width: 4px; height: 4px; border-radius: 50%; background: #d4d4d4; }
    .sbar { width: 9px; flex: none; display: flex; flex-direction: column; }
    .sbtn { height: 10px; display: flex; align-items: center; justify-content: center; font-size: 5px; color: #666; }
    .sthumb { height: 234px; background: #fff; }
    .strack { flex: 1; background: #e9e9e9; }
    .nav { display: flex; gap: 4px; padding: 5px 0 0 4px; height: 17px; box-sizing: border-box; flex: none; }
    .navpad { flex: none; height: 60px; }
    .center { flex: 1; min-width: 0; display: flex; flex-direction: column; }
    .view { flex: 1; background: #b3b2b6; position: relative; min-height: 0; overflow: hidden; }
    .model { position: absolute; inset: 0; }
    .vbar {
      position: absolute; top: 0; left: 233px; width: 331px; height: 16px; background: #c5c5c8;
      display: flex; align-items: center; padding-left: 1px; box-sizing: border-box;
    }
    .vb { width: 14px; height: 14px; display: flex; align-items: center; justify-content: center; flex: none; }
    .vb.on { background: var(--g); }
    .vs { width: 6px; flex: none; font-size: 6px; color: #444; text-align: center; line-height: 14px; padding-top: 2px; box-sizing: border-box; }
    .vs.wide { width: 11px; }
    .vgap { width: 4px; flex: none; }
    .vdiv { width: 1px; height: 13px; margin: 0 2.5px; background: #aaa; flex: none; }
    .sc-label { position: absolute; left: 43px; top: 413px; font-size: 5.6px; color: #555; }
    .bar { position: absolute; left: 10px; top: 416px; width: 31px; height: 3px; background: #fff; border: 1px solid #222; box-sizing: content-box; }
    .vtabs { height: 12px; background: #f4f4f4; display: flex; align-items: center; flex: none; }
    .mv { width: 42px; height: 12px; margin-left: 6px; background: #cfe1f6; display: flex; align-items: center; justify-content: center; color: #3c4c60; transform: skewX(-12deg); }
    .mv span { transform: skewX(12deg); }
    .tail { flex: 1; display: flex; justify-content: flex-end; gap: 3px; padding-right: 3px; color: #777; font-size: 6px; }
    .arr { color: #777; font-size: 5px; margin-left: 2px; }
    .tbl { height: 14px; background: #8d9092; color: #e6e6e6; display: flex; align-items: center; justify-content: space-between; padding: 0 3px 0 2px; flex: none; border-top: 1px solid #eee; box-sizing: border-box; }
    .right { width: 15px; flex: none; background: #f0f0f0; padding: 2px 0 0 2px; box-sizing: border-box; display: flex; flex-direction: column; gap: 1px; }
    .vtab { width: 11px; display: flex; flex-direction: column; align-items: center; gap: 1px; background: #f8f8f8; padding: 2px 0; }
    .vtxt { writing-mode: vertical-rl; font-size: 5.8px; color: #333; }
    .bottom { height: 14px; background: #f0f0f0; display: flex; align-items: center; flex: none; padding-left: 4px; }
    .combo { height: 9px; background: #fff; border: 1px solid #ccc; display: flex; align-items: center; justify-content: space-between; padding: 0 3px 0 2px; box-sizing: border-box; font-size: 6px; color: #555; width: 27px; margin-left: 2px; }
    .gb { width: 13px; height: 14px; margin-right: 1px; background: var(--g); position: relative; flex: none; }
    .gb.off { background: #eee; }
    .gb svg { position: absolute; left: 0; top: 0; }
    .t14 { width: 14.2px; display: flex; justify-content: center; flex: none; }
    .sep { width: 5px; flex: none; }
    .sep.lg { width: 13px; }
  `;

  renderBtn(b: Btn | Col) {
    if ("col" in b) {
      return html`<div class="scol" style="width:${b.w}px">${b.col.map((k) => ic(8, smallIcons[k]))}</div>`;
    }
    return html`<div class="big" style="width:${b.w}px">
      <span class="ic">${ic(19, bigIcons[b.i])}</span>
      <span class="lb">${b.t[0]}<br />${b.t[1]}</span>
    </div>`;
  }

  renderModel() {
    return html`<svg class="model" width="798" height="428" viewBox="129 84 798 428">
      <defs>
        <linearGradient id="greyBlade" gradientUnits="userSpaceOnUse" x1="900" y1="420" x2="1060" y2="830">
          <stop offset="0" stop-color="#bdbfc9"/><stop offset="0.55" stop-color="#a9abb7"/><stop offset="1" stop-color="#8b8c99"/>
        </linearGradient>
        <radialGradient id="blueBlade" gradientUnits="userSpaceOnUse" cx="720" cy="600" r="560">
          <stop offset="0" stop-color="#7dabe2"/><stop offset="0.7" stop-color="#709dd6"/><stop offset="1" stop-color="#5f8cc4"/>
        </radialGradient>
        <clipPath id="ridgeClip"><path d=${ridgePath}/></clipPath>
        <filter id="b8" x="-30%" y="-30%" width="160%" height="160%"><feGaussianBlur stdDeviation="16"/></filter>
        <filter id="b3" x="-30%" y="-30%" width="160%" height="160%"><feGaussianBlur stdDeviation="7"/></filter>
      </defs>

      <!-- root block, drawn in thirds of a pixel -->
      <g transform="translate(440 140) scale(.33333)">
        <path d=${ridgePath} fill="#b6b8c5"/>
        <g clip-path="url(#ridgeClip)">
          <path d="M345 58 L800 240" stroke="#a0a3b2" stroke-width="12" filter="url(#b3)"/>
          <path d="M240 110 L740 300" stroke="#9da1b1" stroke-width="22" filter="url(#b3)"/>
          <path d="M290 60 L780 235" stroke="#c4c6d0" stroke-width="16" filter="url(#b3)"/>
          <path d="M390 55 L900 240" stroke="#c2c4ce" stroke-width="12" filter="url(#b3)"/>
        </g>
        <path d="M665 345 C700 345 725 310 745 280 C765 250 785 235 805 237 C825 240 825 280 845 287 C865 285 870 240 905 235 C925 240 927 290 930 340 C935 400 935 440 915 480 C895 510 875 505 860 500 C840 500 838 530 830 565 C815 600 790 610 770 605 C750 590 735 585 710 600 L680 622Z" fill="#62656c"/>
        <path d="M825 260 L840 272 L830 282Z" fill="#6ea0dc"/>
        <ellipse cx="867" cy="390" rx="12" ry="17" fill="#3f5f94" transform="rotate(12 867 390)"/>
        <path d="M735 590 L760 602 L725 592Z" fill="#3f5f94"/>
        <path d="M270 135 L290 124 L400 160 L520 212 L660 258 L620 263 L560 240 L450 205 L370 175Z" fill="#73a6e3"/>
        <path d="M245 155 L265 148 L370 188 L345 195 L290 170Z" fill="#6d9ad2"/>
        <path d="M22 70 L45 67 L75 85 L40 80Z" fill="#73a6e3"/>
        <path d="M100 78 L130 85 L150 92 L120 88Z" fill="#73a6e3"/>
        <path d="M15 72 L637 295 L650 792 L530 740 L300 560 L15 355Z" fill="#3f5b84"/>
        <path d="M637 295 L667 280 L682 780 L650 792Z" fill="#3f5c8e"/>
        <path d="M637 295 L640 520 L645 792" fill="none" stroke="#6a6d74" stroke-width="5" stroke-dasharray="22 9 40 5"/>
        <path d="M650 400 L668 412 L660 470 L668 560 L655 620 L668 700 L660 770" fill="none" stroke="#686b72" stroke-width="4" stroke-dasharray="12 18 26 24"/>
        <path d="M667 415 L684 435 L674 452Z" fill="#3f5c8e"/>
        <path d="M70 310 C170 265 300 310 400 420 C480 510 530 610 590 700" fill="none" stroke="#6d9edc" stroke-width="60" filter="url(#b8)" opacity=".85"/>
        <path d="M300 345 C380 390 440 470 490 550 C520 600 550 650 580 690" fill="none" stroke="#80b1ee" stroke-width="20" filter="url(#b3)" opacity=".8"/>
        <ellipse cx="592" cy="733" rx="22" ry="18" fill="#2f4565" filter="url(#b3)"/>
      </g>

      <!-- blade -->
      <g transform="translate(200 140) scale(.33333)">
        <path d="M52 700 C55 720 70 722 100 716 C160 712 230 740 310 800 C400 860 480 930 578 1034 L590 1026 L300 740Z" fill="#5f6066"/>
        <path d="M50 690 C55 665 90 655 120 645 L650 405 C700 385 740 362 790 335 C830 320 880 328 920 340 L1050 420 L1150 520 L1220 610 L1290 720 L578 1028 C520 930 430 820 300 730 C200 670 110 650 50 690Z" fill="url(#greyBlade)"/>
        <path d="M1290 722 L1240 745 L578 1030 L582 1024 L1250 738Z" fill="#4b4c55"/>
        <path d="M100 652 L650 405 C720 395 800 375 880 355 L900 352 L960 392 L985 402 L990 412 L1010 420 L1015 430 L1030 438 L1035 450 L1050 458 L1053 470 L1068 478 L1072 492 L1085 498 L1088 512 L1102 520 L1100 530 L1118 538 L1113 550 L1137 570 L1118 588 L1126 598 L1112 608 L1124 622 L1112 640 L1110 655 L1085 668 L1062 700 L1000 745 L880 830 L700 945 L620 985 L582 1000 L578 1028 C520 930 430 820 300 730 C230 685 160 650 100 652Z" fill="url(#blueBlade)"/>
        <path d="M50 690 C70 652 130 643 190 665 C280 700 380 780 450 860 C500 915 545 975 578 1028 C520 965 440 880 360 820 C280 755 190 700 120 703 C95 703 75 715 62 714 C55 710 50 700 50 690Z" fill="#3e5a88"/>
        <path d="M120 645 C220 665 320 730 410 815 C480 885 540 960 578 1028" fill="none" stroke="#8cbbf2" stroke-width="2.5" opacity=".7"/>
      </g>

      <!-- triad -->
      <g stroke-width="1.2" fill="none">
        <path d="M150.500 490V476" stroke="#1fb12a"/>
        <path d="M150.500 490L161 494" stroke="#d93a3a"/>
        <path d="M150.500 490L141 495" stroke="#2a2ad0"/>
      </g>
      <text x="160" y="498" font-size="5.500" fill="#c33" font-family="Open Sans">X</text>
      <text x="139" y="498" font-size="5.500" fill="#2a2ad0" font-family="Open Sans">Z</text>
    </svg>`;
  }

  render() {
    return html`<div class="app">
      <div class="title">
        <div class="qat">
          <span class="logo">Cx</span>
          ${["new", "open"].map((k) => ic(9, smallIcons[k]))}
          ${ic(9, svg`<rect x="2" y="2" width="20" height="20" fill="#444"/><rect x="6" y="2" width="12" height="7" fill="#c33"/><rect x="6" y="14" width="12" height="8" fill="#ddd"/>`)}
          ${["import", "import", "import"].map((k) => ic(9, smallIcons[k]))}
          ${ic(7, svg`<path d="M3 14L10 7v4h10v6H10v4z" fill="#ccc"/>`)}
          ${ic(7, svg`<path d="M21 14L14 7v4H4v6h10v4z" fill="#ccc"/>`)}
          <span class="arr">▾</span>
        </div>
        <div class="title-text">2MT PRESENTATION.CXPro| - Geomagic Control X 2024. 2. 0 [Professional] [Not for Resale]</div>
        <div class="win"><span>-</span><span>❐</span><span>×</span></div>
      </div>

      <div class="tabs">
        <div class="tab menu">MENU</div>
        <div class="tab home">HOME</div>
        ${tabs.map(([t, w]) => html`<div class="tab" style="width:${w}px">${t}</div>`)}
      </div>

      <div class="ribbon">
        <div class="group" style="width:36px">
          <div class="gbody filegrp">
            ${[["new", "New"], ["open", "Open"], ["import", "Import"]].map(
              ([k, t]) => html`<div class="fbtn">${ic(9, smallIcons[k])}<span>${t}</span></div>`
            )}
          </div>
          <div class="gname">File</div>
        </div>
        ${ribbon.map(
          (g) => html`<div class="group" style="width:${g.w}px">
            <div class="gbody">${g.items.map((b) => this.renderBtn(b))}</div>
            <div class="gname">${g.name}</div>
          </div>`
        )}
        <div class="group fill"><div class="gbody"></div><div class="gname"></div></div>
      </div>

      <div class="main">
        <div class="left">
          <div class="phead"><span>Model Manager</span><span class="pbtns">${ic(6, smallIcons.pin)}${ic(6, smallIcons.close)}</span></div>
          <div class="ptabs">
            <div class="ptab on">${ic(8, smallIcons.manager)}<span>Model Manager</span></div>
            <div class="ptab">${ic(8, smallIcons.help)}<span>Help</span></div>
          </div>
          <div class="sec">Input Data</div>
          <div class="sec">Scan Process</div>
          <div class="sec on">Result Data - 1</div>
          <div class="treewrap">
            <div class="tree">
              ${tree.map(
                (r) => html`<div class="row" style="padding-left:${r.d * 11}px">
                  <span class="arrow">${r.a === "o"
                    ? ic(7, svg`<path d="M3 6h18L12 20z" fill="#7d9f4b"/>`)
                    : r.a === "c"
                      ? ic(7, svg`<path d="M6 3v18l14-9z" fill="#7d9f4b"/>`)
                      : ""}</span>
                  <span class="rico">${ic(9, smallIcons[r.i])}</span>
                  <span class="rname">${r.l}</span>
                  ${r.n ? html`<span class="rn">${r.n}</span>` : ""}
                  <span class="reye">${r.e === "e" ? ic(6, eyeSoft) : r.e === "d" ? html`<span class="dot"></span>` : ""}</span>
                </div>`
              )}
            </div>
            <div class="sbar">
              <div class="sbtn">▴</div>
              <div class="sthumb"></div>
              <div class="strack"></div>
              <div class="sbtn">▾</div>
            </div>
          </div>
          <div class="sec">Result Navigator</div>
          <div class="nav">
            ${ic(10, smallIcons.views)}
            ${[0, 1, 2].map(() => ic(10, svg`<rect x="2" y="5" width="20" height="17" fill="#f0f0f0" stroke="#b5b5b5" stroke-width="2"/><rect x="7" y="10" width="9" height="7" fill="#ccc"/>`))}
          </div>
          <div class="navpad"></div>
        </div>

        <div class="center">
          <div class="view">
            ${this.renderModel()}
            <div class="vbar">
              ${viewBar.map(
                ([k, m], i) => html`<span class="vb ${i === 8 || i === 10 ? "on" : ""}">${ic(11, tool(k))}</span>
                  ${m === 1
                    ? html`<span class="vs">.</span>`
                    : m === 2
                      ? html`<span class="vdiv"></span>`
                      : m === 3
                        ? html`<span class="vs wide">.</span>`
                        : m === 4
                          ? html`<span class="vgap"></span>`
                          : ""}`
              )}
            </div>
            <div class="bar"></div>
            <div class="sc-label">0.25 in</div>
          </div>
          <div class="vtabs">
            <span class="arr">◂</span>
            <div class="mv"><span>Model View</span></div>
            <div class="tail"><span>▹</span><span>×</span><span>■</span><span>▾</span></div>
          </div>
          <div class="tbl"><span>Tabular View - Plane (Auto)</span><span class="pbtns">${ic(5, svg`<path d="M3 7h18L12 19z" fill="#eee"/>`)}${ic(6, smallIcons.pin)}${ic(6, smallIcons.close)}</span></div>
        </div>

        <div class="right">
          <div class="vtab">${ic(9, smallIcons.props)}<span class="vtxt">Properties</span></div>
          <div class="vtab">${ic(9, smallIcons.display)}<span class="vtxt">Display</span></div>
        </div>
      </div>

      <div class="bottom">
        <span class="gb">${ic(13, svg`<rect x="4" y="4" width="16" height="16" fill="#7f9c3e" stroke="#223" stroke-width="1.6"/><path d="M4 20L20 4" stroke="#223"/>`)}</span>
        <span class="combo">Auto<span>▾</span></span>
        <span class="combo">Auto<span>▾</span></span>
        <span class="sep"></span>
        ${greenGlyphs.map((g) => html`<span class="gb">${ic(13, svg`${g}<g transform="translate(8 11) scale(.6)">${eye}</g>`)}</span>`)}
        <span class="gb off">${ic(13, svg`<rect x="3" y="3" width="7" height="6" fill="#fff" stroke="#bbb"/><rect x="13" y="3" width="7" height="6" fill="#fff" stroke="#bbb"/><rect x="3" y="13" width="7" height="6" fill="#fff" stroke="#bbb"/><rect x="13" y="13" width="7" height="6" fill="#fff" stroke="#bbb"/>`)}</span>
        ${greenEnd.map((g) => html`<span class="gb">${ic(13, svg`${g}<g transform="translate(8 11) scale(.6)">${eye}</g>`)}</span>`)}
        <span class="arr">.</span>
        <span class="sep lg"></span>
        ${bottomBar.map((k) => html`<span class="t14">${ic(10, tool(k))}</span>`)}
        <span class="sep"></span>
        <span class="t14">${ic(10, tool("doc"))}</span>
        <span class="sep lg"></span>
        ${bottomBar2.map((k) => html`<span class="t14">${ic(10, tool(k))}</span>`)}
      </div>
    </div>`;
  }
}
